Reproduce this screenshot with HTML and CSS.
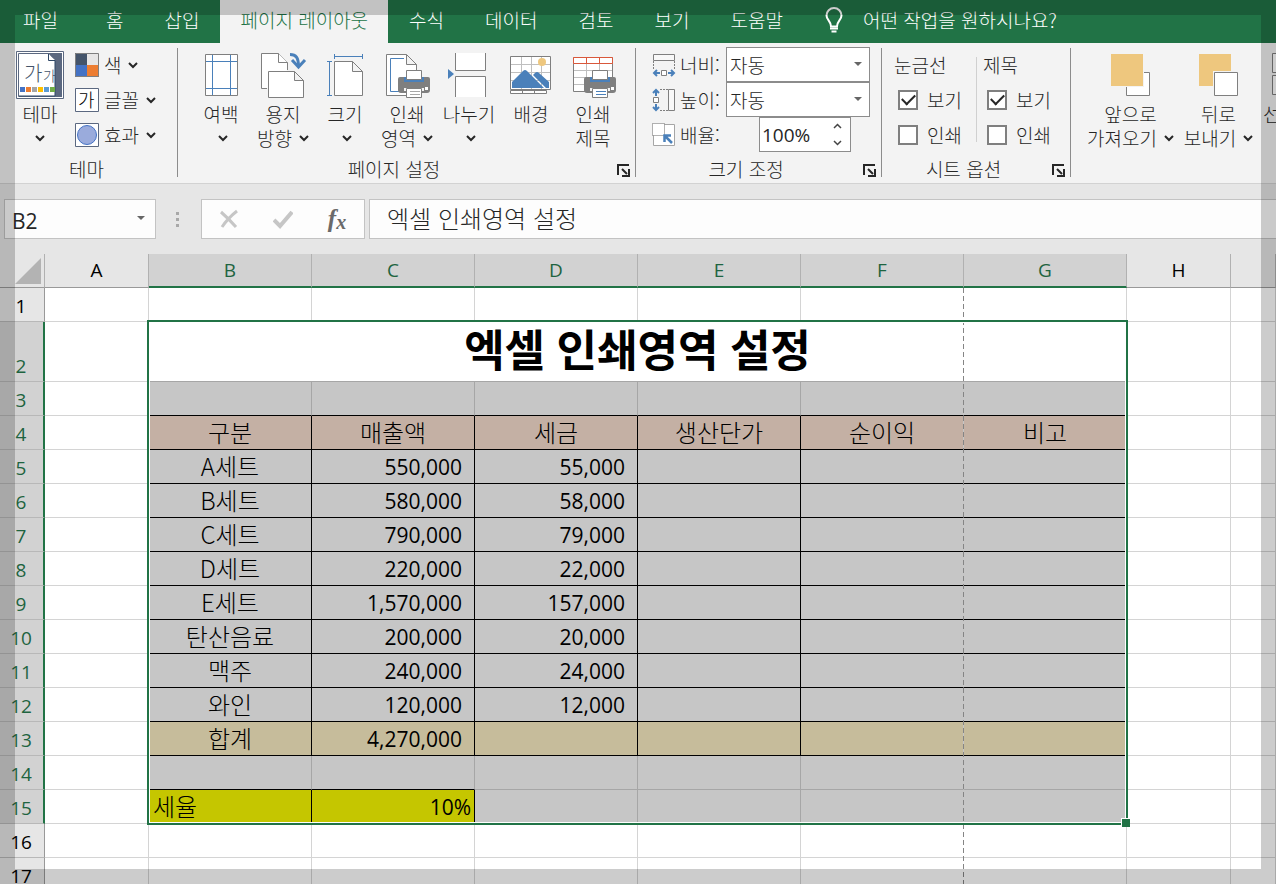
FILE: index.html
```html
<!DOCTYPE html>
<html lang="ko">
<head>
<meta charset="utf-8">
<title>엑셀 인쇄영역 설정</title>
<link rel="stylesheet" href="styles.css">
</head>
<body>
<svg class="defs" aria-hidden="true">
  <symbol id="chev" viewBox="0 0 10 8"><path d="M1 2l4 4 4-4" fill="none" stroke="#262626" stroke-width="2"/></symbol>
  <symbol id="drop" viewBox="0 0 8 4"><path d="M0 0h8L4 4z" fill="#666"/></symbol>
  <symbol id="launch" viewBox="0 0 13 13"><path d="M1 11V1h11" fill="none" stroke="#262626" stroke-width="2"/><path d="M5 5l5 5M12 5v7H5" fill="none" stroke="#262626" stroke-width="2"/></symbol>
  <symbol id="printer" viewBox="0 0 34 30"><path d="M3 8h28q2 0 2 2v11q0 3-3 3H4q-3 0-3-3V10q0-2 2-2z" fill="#7f7f7f"/><path d="M7 8h20v5H7z" fill="#4a80ba"/><path d="M9.500 1.500h15V10.500h-15z" fill="#fff" stroke="#7f7f7f"/><path d="M7 19h20v3H7z" fill="#f3f3f3"/><path d="M9.500 19.500h15v9h-15z" fill="#fff" stroke="#7f7f7f"/><path d="M28 18h3v3h-3z" fill="#fff"/></symbol>
</svg>

<nav class="tabs">
  <button class="tab file">파일</button>
  <button class="tab">홈</button>
  <button class="tab">삽입</button>
  <button class="tab active">페이지 레이아웃</button>
  <button class="tab">수식</button>
  <button class="tab">데이터</button>
  <button class="tab">검토</button>
  <button class="tab">보기</button>
  <button class="tab">도움말</button>
  <button class="tab tell"><svg width="20" height="26" viewBox="0 0 20 26"><path d="M7 19.500C7 14 2.500 13 2.500 8.500a7 7 0 0 1 15 0C17.500 13 13 14 13 19.500z" fill="none" stroke="#fff" stroke-width="2"/><path d="M6 21.500h8M7.500 24.500h5" stroke="#fff" stroke-width="2"/></svg>어떤 작업을 원하시나요?</button>
</nav>

<div class="ribbon">
  <section class="group theme">
    <div class="tools">
      <button class="big"><svg class="art" viewBox="0 0 48 48"><path d="M.5.500h47v47H.5z" fill="#fff" stroke="#5b6880"/><path d="M2.500 2.500h43v43h-43z" fill="#fff" stroke="#5b6880"/><text x="8" y="30" class="ga">가</text><text x="27" y="30" class="ga small-ga">가</text><path d="M32 2h14v44h-7V10z" fill="#5b6880"/><path d="M32.500 3v6.500H39V45H3" fill="none" stroke="#2f4766"/><path d="M33 4l6 5h-6z" fill="#fff"/><path d="M4 36h5v5H4z" fill="#4472c4"/><path d="M10 36h5v5h-5z" fill="#ed7d31"/><path d="M16 36h5v5h-5z" fill="#a5a5a5"/><path d="M22 36h5v5h-5z" fill="#ffc000"/><path d="M28 36h5v5h-5z" fill="#5b9bd5"/><path d="M34 36h5v5h-5z" fill="#70ad47"/></svg><span>테마</span><span><svg class="chev"><use href="#chev"/></svg></span></button>
      <div class="smalls">
        <button class="small"><svg class="ico" viewBox="0 0 24 24"><path d="M0 0h12v12H0z" fill="#44546a"/><path d="M12 0h12v12H12z" fill="#e7e6e6"/><path d="M0 12h12v12H0z" fill="#4472c4"/><path d="M12 12h12v12H12z" fill="#ed7d31"/><path d="M.5.500h23v23H.5z" fill="none" stroke="#7f7f7f"/></svg>색<svg class="chev"><use href="#chev"/></svg></button>
        <button class="small"><svg class="ico" viewBox="0 0 24 24"><path d="M.5.500h23v23H.5z" fill="#fff" stroke="#5b6880"/><text x="3" y="19" class="font-ga">가</text></svg>글꼴<svg class="chev"><use href="#chev"/></svg></button>
        <button class="small"><svg class="ico" viewBox="0 0 24 24"><path d="M.5.500h23v23H.5z" fill="#fff" stroke="#5b6880"/><circle cx="12" cy="12" r="9.500" fill="#9aabdc" stroke="#4472c4"/></svg>효과<svg class="chev"><use href="#chev"/></svg></button>
      </div>
    </div>
    <div class="caption"><span>테마</span></div>
  </section>

  <section class="group setup">
    <div class="tools">
      <button class="big"><svg class="art" viewBox="0 0 48 48"><path d="M8.500 3.500h32v41h-32z" fill="#fff" stroke="#7f7f7f"/><path d="M15.500 4v40M33.500 4v40M9 10.500h31M9 37.500h31" stroke="#4a80ba"/></svg><span>여백</span><span class="solo"><svg class="chev"><use href="#chev"/></svg></span></button>
      <button class="big"><svg class="art" viewBox="0 0 48 48"><path d="M8 37.500H2.500v-35h17l9 9V19" fill="#fff" stroke="#7f7f7f"/><path d="M19.500 2.500v9h9M9.500 20.500h26l9 9v17h-35zM35.500 20.500v9h9" fill="#fff" stroke="#7f7f7f"/><path d="M31 3.500c6 0 8.500 3 8.500 12" fill="none" stroke="#4a80ba" stroke-width="3"/><path d="M33 9l6.500 7L46 9" fill="none" stroke="#4a80ba" stroke-width="3"/></svg><span>용지</span><span>방향<svg class="chev"><use href="#chev"/></svg></span></button>
      <button class="big"><svg class="art" viewBox="0 0 48 48"><path d="M13.500 10.500h18l10 10v24h-28zM31.500 10.500v10h10" fill="#fff" stroke="#7f7f7f"/><path d="M13.500 3v5M41.500 3v5M13.500 5.500h28M8.500 10.500v34M6 10.500h5M6 44.500h5" stroke="#4a80ba"/></svg><span>크기</span><span class="solo"><svg class="chev"><use href="#chev"/></svg></span></button>
      <button class="big"><svg class="art" viewBox="0 0 48 48"><path d="M3.500 3.500h20l10 10v31h-30zM23.500 3.500v10h10" fill="#fff" stroke="#7f7f7f"/><path d="M21 7.500H7.500v33H16" fill="none" stroke="#4a80ba"/><use href="#printer" x="14" y="18" width="34" height="30"/><path d="M27 40.500h10M27 43.500h10" stroke="#a6a6a6"/></svg><span>인쇄</span><span>영역<svg class="chev"><use href="#chev"/></svg></span></button>
      <button class="big"><svg class="art" viewBox="0 0 48 48"><path d="M10.500 2v17.500h30V2M10.500 46V25.500h30V46" fill="#fff" stroke="#7f7f7f"/><path d="M3 18l6 5-6 5z" fill="#4a80ba"/></svg><span>나누기</span><span class="solo"><svg class="chev"><use href="#chev"/></svg></span></button>
      <button class="big"><svg class="art" viewBox="0 0 48 48"><path d="M3.500 39.500h36v3h-36zM15.500 39v4M27.500 39v4" fill="#fff" stroke="#7f7f7f"/><path d="M3.500 5.500h40v33h-40z" fill="#fff" stroke="#7f7f7f"/><path d="M14.500 6v32M24.500 6v32M34.500 6v32M4 13.500h39M4 21.500h39M4 29.500h39" stroke="#bfbfbf"/><circle cx="35" cy="11" r="4" fill="#eec77e"/><path d="M5 37v-6l11-11q2-2 4 0l17 17z" fill="#4a80ba"/><path d="M26 24l2-2q2-2 4 0l10 9v6h-3z" fill="#4a80ba"/></svg><span>배경</span><span></span></button>
      <button class="big"><svg class="art" viewBox="0 0 48 48"><path d="M4.500 6.500h39v34h-39z" fill="#fff" stroke="#7f7f7f"/><path d="M17.500 12v28M30.500 12v28M5 19.500h38M5 26.500h38M5 33.500h38" stroke="#bfbfbf"/><path d="M4.500 6.500h39v6h-39zM17.500 6v6M30.500 6v6" fill="#fff" stroke="#d9583b"/><use href="#printer" x="14" y="18" width="34" height="30"/><path d="M27 40.500h10M27 43.500h10" stroke="#4a80ba"/></svg><span>인쇄</span><span>제목</span></button>
    </div>
    <div class="caption"><span>페이지 설정</span><button class="launch" aria-label="페이지 설정 열기"><svg><use href="#launch"/></svg></button></div>
  </section>

  <section class="group scale">
    <div class="tools fields">
      <svg class="ico" viewBox="0 0 24 24"><path d="M1.500 1.500h21v6h-21z" fill="#f8f8f8" stroke="#7f7f7f"/><path d="M1.500 8v8M22.500 8v8" stroke="#7f7f7f" stroke-dasharray="2 1"/><path d="M9.500 17.500h5v5h-5z" fill="#fff" stroke="#7f7f7f"/><path d="M8 20H2m3-3l-3 3 3 3M16 20h6m-3-3l3 3-3 3" fill="none" stroke="#4a80ba" stroke-width="2"/></svg>
      <label for="w">너비:</label>
      <span class="pick"><select id="w"><option>자동</option></select><svg class="drop"><use href="#drop"/></svg></span>
      <svg class="ico" viewBox="0 0 24 24"><path d="M16.500 1.500h6v21h-6z" fill="#f8f8f8" stroke="#7f7f7f"/><path d="M8 1.500h8M8 22.500h8" stroke="#7f7f7f" stroke-dasharray="2 1"/><path d="M1.500 9.500h5v5h-5z" fill="#fff" stroke="#7f7f7f"/><path d="M4 8V2M1 5l3-3 3 3M4 16v6m-3-3l3 3 3-3" fill="none" stroke="#4a80ba" stroke-width="2"/></svg>
      <label for="h">높이:</label>
      <span class="pick"><select id="h"><option>자동</option></select><svg class="drop"><use href="#drop"/></svg></span>
      <svg class="ico" viewBox="0 0 24 24"><path d="M1.500 1.500h21v21h-21z" fill="#fff" stroke="#a6a6a6"/><path d="M.5.500h12v12H.5z" fill="#fff" stroke="#666" stroke-dasharray="1 1"/><path d="M20 20l-7-7m-.5 6v-6.500H19" fill="none" stroke="#4a80ba" stroke-width="2.500"/></svg>
      <label for="z">배율:</label>
      <span class="spin"><input id="z" type="text" value="100%"><span class="steps"><button aria-label="늘리기"><svg viewBox="0 0 9 6"><path d="M1 5l3.500-3.500L8 5" fill="none" stroke="#444" stroke-width="1.500"/></svg></button><button aria-label="줄이기"><svg viewBox="0 0 9 6"><path d="M1 1l3.500 3.500L8 1" fill="none" stroke="#444" stroke-width="1.500"/></svg></button></span></span>
    </div>
    <div class="caption"><span>크기 조정</span><button class="launch" aria-label="크기 조정 열기"><svg><use href="#launch"/></svg></button></div>
  </section>

  <section class="group options">
    <div class="tools">
      <div class="checks">
        <span class="head">눈금선</span>
        <label><input type="checkbox" checked>보기</label>
        <label><input type="checkbox">인쇄</label>
      </div>
      <div class="checks second">
        <span class="head">제목</span>
        <label><input type="checkbox" checked>보기</label>
        <label><input type="checkbox">인쇄</label>
      </div>
    </div>
    <div class="caption"><span>시트 옵션</span><button class="launch" aria-label="시트 옵션 열기"><svg><use href="#launch"/></svg></button></div>
  </section>

  <section class="group arrange">
    <div class="tools">
      <button class="big forward"><svg class="art" viewBox="0 0 48 48"><path d="M19.500 21.500h23v23h-23z" fill="#fff" stroke="#7f7f7f"/><path d="M3 2h34v34H3z" fill="#f3f3f3"/><path d="M4 3h32v32H4z" fill="#eec77e"/></svg><span>앞으로</span><span>가져오기<svg class="chev"><use href="#chev"/></svg></span></button>
      <button class="big back"><svg class="art" viewBox="0 0 48 48"><path d="M4 3h32v32H4z" fill="#eec77e"/><path d="M18 20h26v26H18z" fill="#f3f3f3"/><path d="M19.500 21.500h23v23h-23z" fill="#fff" stroke="#7f7f7f"/></svg><span>뒤로</span><span>보내기<svg class="chev"><use href="#chev"/></svg></span></button>
      <button class="big pane"><svg class="art" viewBox="0 0 48 48"><path d="M9.500 2.500h30v19h-30zM9.500 24.500h30v19h-30z" fill="#fff" stroke="#7f7f7f"/></svg><span>선</span></button>
    </div>
  </section>
</div>

<div class="formula">
  <div class="namebox"><input type="text" value="B2" aria-label="이름 상자"><svg class="drop"><use href="#drop"/></svg></div>
  <div class="dots"><i></i><i></i><i></i></div>
  <div class="fx">
    <button aria-label="취소"><svg width="20" height="20" viewBox="0 0 20 20"><path d="M2 3q8 7 15 15M18 2Q9 9 3 18" fill="none" stroke="#c6c6c6" stroke-width="3"/></svg></button>
    <button aria-label="입력"><svg width="20" height="20" viewBox="0 0 20 20"><path d="M1 11l6 6L19 3" fill="none" stroke="#c6c6c6" stroke-width="4"/></svg></button>
    <button class="fn" aria-label="함수 삽입">f<span>x</span></button>
  </div>
  <input class="bar" type="text" value="엑셀 인쇄영역 설정" aria-label="수식 입력줄">
</div>

<main class="sheet">
<table>
  <colgroup><col class="c-head"><col class="c-side"><col class="c-main"><col class="c-main"><col class="c-main"><col class="c-main"><col class="c-main"><col class="c-main"><col class="c-side"><col></colgroup>
  <thead>
    <tr><th class="corner"><svg width="26" height="26" viewBox="0 0 26 26"><path d="M26 0v26H0z" fill="#b3b3b3"/></svg></th><th>A</th><th class="on">B</th><th class="on">C</th><th class="on">D</th><th class="on">E</th><th class="on f">F<i class="break"></i></th><th class="on">G</th><th>H</th><th></th></tr>
  </thead>
  <tbody>
    <tr><th>1</th><td></td><td></td><td></td><td></td><td></td><td class="f"></td><td></td><td></td><td></td></tr>
    <tr class="sel title"><th>2</th><td></td><td colspan="6" class="merged">엑셀 인쇄영역 설정<i class="range"></i></td><td></td><td></td></tr>
    <tr class="sel blank above"><th>3</th><td></td><td class="s"></td><td class="s"></td><td class="s"></td><td class="s"></td><td class="s f"></td><td class="s"></td><td></td><td></td></tr>
    <tr class="sel data heads"><th>4</th><td></td><td class="s">구분</td><td class="s">매출액</td><td class="s">세금</td><td class="s">생산단가</td><td class="s f">순이익</td><td class="s">비고</td><td></td><td></td></tr>
    <tr class="sel data"><th>5</th><td></td><td class="s">A세트</td><td class="s n">550,000</td><td class="s n">55,000</td><td class="s"></td><td class="s f"></td><td class="s"></td><td></td><td></td></tr>
    <tr class="sel data"><th>6</th><td></td><td class="s">B세트</td><td class="s n">580,000</td><td class="s n">58,000</td><td class="s"></td><td class="s f"></td><td class="s"></td><td></td><td></td></tr>
    <tr class="sel data"><th>7</th><td></td><td class="s">C세트</td><td class="s n">790,000</td><td class="s n">79,000</td><td class="s"></td><td class="s f"></td><td class="s"></td><td></td><td></td></tr>
    <tr class="sel data"><th>8</th><td></td><td class="s">D세트</td><td class="s n">220,000</td><td class="s n">22,000</td><td class="s"></td><td class="s f"></td><td class="s"></td><td></td><td></td></tr>
    <tr class="sel data"><th>9</th><td></td><td class="s">E세트</td><td class="s n">1,570,000</td><td class="s n">157,000</td><td class="s"></td><td class="s f"></td><td class="s"></td><td></td><td></td></tr>
    <tr class="sel data"><th>10</th><td></td><td class="s">탄산음료</td><td class="s n">200,000</td><td class="s n">20,000</td><td class="s"></td><td class="s f"></td><td class="s"></td><td></td><td></td></tr>
    <tr class="sel data"><th>11</th><td></td><td class="s">맥주</td><td class="s n">240,000</td><td class="s n">24,000</td><td class="s"></td><td class="s f"></td><td class="s"></td><td></td><td></td></tr>
    <tr class="sel data"><th>12</th><td></td><td class="s">와인</td><td class="s n">120,000</td><td class="s n">12,000</td><td class="s"></td><td class="s f"></td><td class="s"></td><td></td><td></td></tr>
    <tr class="sel data total"><th>13</th><td></td><td class="s">합계</td><td class="s n">4,270,000</td><td class="s"></td><td class="s"></td><td class="s f"></td><td class="s"></td><td></td><td></td></tr>
    <tr class="sel blank"><th>14</th><td></td><td class="s over"></td><td class="s over"></td><td class="s"></td><td class="s"></td><td class="s f"></td><td class="s"></td><td></td><td></td></tr>
    <tr class="sel blank"><th>15</th><td></td><td class="s rate name">세율</td><td class="s n rate">10%</td><td class="s"></td><td class="s"></td><td class="s f"></td><td class="s"></td><td></td><td></td></tr>
    <tr><th>16</th><td></td><td></td><td></td><td></td><td></td><td class="f"></td><td></td><td></td><td></td></tr>
    <tr><th>17</th><td></td><td></td><td></td><td></td><td></td><td class="f"></td><td></td><td></td><td></td></tr>
  </tbody>
</table>
</main>
<div class="shade"></div>
</body>
</html>
```
FILE: styles.css
```css
* { box-sizing: border-box; }
body {
  margin: 0;
  height: 100vh;
  overflow: hidden;
  display: flex;
  flex-direction: column;
  background: #e6e6e6;
  color: #262626;
  font: 300 19px/24px "Noto Sans CJK KR Light", "Noto Sans CJK KR DemiLight", "Open Sans", "Noto Sans CJK KR", sans-serif;
}
button, input, select { font: inherit; color: inherit; }
button { border: 0; padding: 0; background: none; white-space: nowrap; }
svg { display: block; flex: none; }
i { font-style: normal; }
.defs { position: absolute; width: 0; height: 0; }

/* Tabs */
.tabs { display: flex; gap: 1px; height: 43px; flex: none; background: #217346; padding-left: 3px; }
.tab { padding: 0 20px 4px; color: #fff; }
.tab.file { margin-right: 7px; }
.tab.active { background: #f3f3f3; color: #217346; }
.tell { display: flex; align-items: center; gap: 19px; }

/* Ribbon */
.ribbon {
  display: flex;
  flex: none;
  height: 141px;
  overflow: hidden;
  background: #f3f3f3;
  border-bottom: 1px solid #d2d2d2;
}
.group { position: relative; flex: none; display: flex; flex-direction: column; padding-top: 4px; }
.group:not(.arrange)::after {
  content: "";
  position: absolute;
  right: 0;
  top: 5px;
  bottom: 6px;
  border-right: 1px solid #8c8c8c;
}
.tools { display: flex; height: 110px; align-items: flex-start; }
.caption { display: flex; align-items: center; height: 24px; text-align: center; }
.caption span { flex: 1; }
.launch { width: 26px; padding: 3px 0 0 7px; }
.launch svg { width: 13px; height: 13px; }
.chev { width: 10px; height: 8px; }
.big { display: flex; flex-direction: column; align-items: center; width: 62px; padding-top: 4px; }
.big .art { width: 48px; height: 48px; margin-bottom: 3px; }
.big span { display: flex; align-items: center; gap: 7px; height: 24px; }
.big .solo { padding-left: 4px; }
.ga { font-size: 20px; fill: #44546a; }
.small-ga { font-size: 14px; }
.font-ga { font-size: 18px; fill: #000; font-weight: 400; }
.ico { width: 24px; height: 24px; }

.theme { width: 178px; padding-left: 16px; }
.theme .caption { margin: 0 5px 0 -16px; }
.theme .big { width: 48px; }
.smalls { margin-left: 11px; }
.small { display: flex; align-items: center; height: 35px; gap: 5px; }
.small .chev { margin-left: 2px; }

.setup { width: 458px; }
.setup .tools { padding-left: 12px; }

.scale { width: 246px; }
.fields { display: grid; grid-template-columns: 28px 46px 144px; grid-auto-rows: 35px; align-items: center; padding-left: 16px; }
.pick { position: relative; display: flex; height: 35px; }
.pick select { appearance: none; width: 100%; padding: 0 3px; border: 1px solid #8c8c8c; border-radius: 0; background: #fff; }
.drop { width: 8px; height: 4px; }
.pick .drop { position: absolute; right: 8px; top: 15px; }
.spin { display: flex; justify-self: end; width: 92px; height: 35px; margin-right: 19px; border: 1px solid #8c8c8c; background: #fff; }
.spin input { width: 64px; border: 0; padding: 0 2px; background: none; font-family: "Open Sans", sans-serif; font-weight: 400; }
.steps { display: flex; flex-direction: column; justify-content: space-between; padding: 4px 9px; }
.steps svg { width: 9px; height: 6px; }
.steps button { height: 8px; }

.options { width: 189px; }
.options .tools { padding-left: 12px; }
.checks { position: relative; width: 82px; display: grid; grid-auto-rows: 35px; align-items: center; }
.checks.second { padding-left: 7px; }
.checks.second::before { content: ""; position: absolute; left: 0; top: 10px; bottom: 10px; border-left: 1px solid #d0d0d0; }
.checks label { display: flex; align-items: center; gap: 9px; padding-left: 4px; white-space: nowrap; }
.checks input { appearance: none; flex: none; display: grid; place-items: center; width: 20px; height: 20px; margin: 0; border: 2px solid #7f7f7f; background: #fff; }
.checks input:checked::before { content: ""; width: 11px; height: 6px; margin-bottom: 3px; border: solid #262626; border-width: 0 0 2px 2px; transform: rotate(-45deg); }

.arrange { flex: 1; min-width: 0; }
.arrange .tools { padding-left: 12px; }
.arrange .big { flex: none; }
.arrange .forward { width: 95px; }
.arrange .back { width: 81px; }
.arrange .pane { width: 60px; align-items: flex-start; padding-left: 4px; }

/* Formula bar */
.formula { display: flex; flex: none; height: 70px; padding: 15px 0 15px 4px; }
.namebox { display: flex; align-items: center; width: 152px; padding: 3px 10px 0 7px; border: 1px solid #c3c3c3; background: #fdfdfd; }
.namebox input { flex: 1; min-width: 0; padding: 0; border: 0; background: none; font: 400 21px/24px "Open Sans", sans-serif; }
.namebox .drop { margin-bottom: 5px; }
.dots { display: flex; flex-direction: column; justify-content: center; align-items: center; gap: 3px; width: 43px; margin-right: 2px; }
.dots i { width: 3px; height: 3px; background: #a8a8a8; }
.fx { display: flex; width: 164px; margin-right: 4px; border: 1px solid #c3c3c3; background: #fdfdfd; }
.fx button { flex: 1; display: flex; align-items: center; justify-content: center; }
.fx .fn { font: italic bold 25px/24px "Liberation Serif", serif; color: #6a6a6a; }
.fn span { font-size: 20px; padding-top: 5px; }
.bar { flex: 1; min-width: 0; padding: 0 17px 4px; border: 1px solid #c3c3c3; border-right: 0; background: #fdfdfd; font-size: 24px; }

/* Sheet */
.sheet { flex: 1; min-height: 0; overflow: hidden; }
table { width: 100%; table-layout: fixed; border-collapse: separate; border-spacing: 0; background: #fff; }
.c-head { width: 45px; }
.c-side { width: 104px; }
.c-main { width: 163px; }
th, td { height: 34px; padding: 0; border: solid #d4d4d4; border-width: 0 1px 1px 0; white-space: nowrap; }
th { font-weight: 400; font-family: "Open Sans", sans-serif; color: #000; background: #e6e6e6; }
thead th { border-color: #b1b1b1; border-bottom-color: #999; line-height: 31px; }
thead th.on { background: #d2d2d2; color: #1e6440; border-bottom: 2px solid #217346; }
.corner { vertical-align: bottom; }
.corner svg { margin: 0 0 3px 15px; }
tbody th { vertical-align: bottom; line-height: 30px; border-right-color: #999; border-bottom-color: #b8b8b8; padding-right: 2px; }
td { color: #000; font-size: 24px; line-height: 30px; text-align: center; }
.sel th { background: #d2d2d2; color: #1e6440; border-right: 2px solid #217346; padding-right: 1px; }
.title td { height: 60px; }
.title .merged { position: relative; padding-bottom: 4px; font-size: 44px; line-height: 52px; font-weight: 700; font-family: "Open Sans", "Noto Sans CJK KR", sans-serif; border-bottom-color: #a6a6a6; }
.s { background: #c6c6c6; border-color: #a6a6a6; padding-bottom: 2px; }
.data .s, .s.rate { border-color: #000; }
.above .s, .s.over { border-bottom-color: #000; }
.heads .s { background: #c4b0a4; }
.total .s { background: #c6bc9b; }
.s.rate { background: #c5c600; }
.n { font-family: "Open Sans", sans-serif; font-weight: 400; font-size: 21px; text-align: right; padding: 0 12px 0 0; }
.rate.n { padding-right: 3px; }
.rate.name { text-align: left; padding-left: 4px; }
td.f { border-right-color: #fff; }
.sel .s.f { border-right-color: #c6c6c6; }
th.f { position: relative; }

.break {
  position: absolute;
  z-index: 1;
  right: -1px;
  top: 34px;
  width: 1px;
  height: 640px;
  background: repeating-linear-gradient(#858585 0 5px, transparent 5px 8px);
}
.range {
  position: absolute;
  z-index: 2;
  left: -2px;
  right: -2px;
  top: -2px;
  height: 505px;
  border: 2px solid #217346;
  box-shadow: inset 0 0 0 1px #fff;
}
.range::after {
  content: "";
  position: absolute;
  right: -4px;
  bottom: -4px;
  width: 8px;
  height: 8px;
  border: solid #fff;
  border-width: 1px 0 0 1px;
  background: #217346;
}

/* Dimmed frame around the window */
.shade { position: fixed; z-index: 5; inset: 0; border: 15px solid rgba(0, 0, 0, .2); pointer-events: none; }
```
